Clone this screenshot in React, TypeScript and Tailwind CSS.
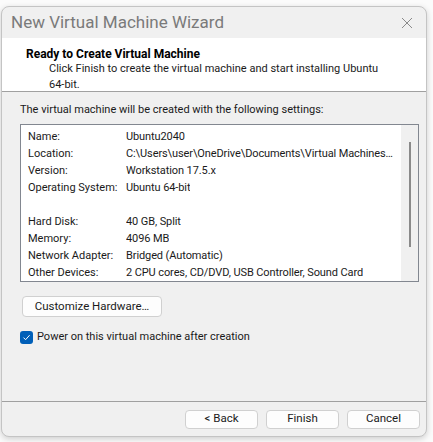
import { useState } from 'react'

const rows = [
  { name: 'Name:', value: 'Ubuntu2040' },
  { name: 'Location:', value: 'C:\\Users\\user\\OneDrive\\Documents\\Virtual Machines…' },
  { name: 'Version:', value: 'Workstation 17.5.x' },
  { name: 'Operating System:', value: 'Ubuntu 64-bit' },
  { name: '', value: '' },
  { name: 'Hard Disk:', value: '40 GB, Split' },
  { name: 'Memory:', value: '4096 MB' },
  { name: 'Network Adapter:', value: 'Bridged (Automatic)' },
  { name: 'Other Devices:', value: '2 CPU cores, CD/DVD, USB Controller, Sound Card' },
]

function WinButton({ label, className }: { label: string; className?: string }) {
  return (
    <button
      className={
        'flex items-center justify-center whitespace-nowrap rounded-[4px] border border-[#d0d0d0] bg-[#fdfdfd] text-[11.5px] text-[#1a1a1a] ' +
        (className || '')
      }
    >
      {label}
    </button>
  )
}

export default function App() {
  const [powerOn, setPowerOn] = useState(true)

  return (
    <div
      className="h-[442px] w-[433px] bg-[#fbfbfb] pt-[6px] pl-[1px]"
      style={{ fontFamily: 'Roboto, "Noto Sans", sans-serif' }}
    >
      <div className="flex h-[431px] w-[426px] flex-col overflow-hidden rounded-[8px] border border-[#c4c4c4] bg-[#f0f0f0] shadow-[0_2px_6px_rgba(0,0,0,0.18)]">
        {/* title bar */}
        <div className="flex h-[31px] shrink-0 items-center justify-between pl-[9px] pr-[13px]">
          <span className="whitespace-nowrap text-[17px] text-[#7a7a7a]">New Virtual Machine Wizard</span>
          <svg width="12" height="12" viewBox="0 0 12 12" className="mt-[1px]">
            <path d="M1 1 L11 11 M11 1 L1 11" stroke="#8a8a8a" strokeWidth="1" />
          </svg>
        </div>

        {/* header */}
        <div className="h-[54px] shrink-0 whitespace-nowrap border-b border-[#a0a0a0] bg-white pl-[24px] pt-[8px] text-[11px] leading-[16px] text-black">
          <div className="text-[12px] font-bold">Ready to Create Virtual Machine</div>
          <div className="mt-[-1px] pl-[23px] text-[#1a1a1a]">
            Click Finish to create the virtual machine and start installing Ubuntu
            <br />
            64-bit.
          </div>
        </div>

        {/* body */}
        <div className="flex flex-1 flex-col px-[18px] text-[11px] text-[#1a1a1a]">
          <div className="mt-[10px] whitespace-nowrap leading-[16px]">
            The virtual machine will be created with the following settings:
          </div>

          <div className="mt-[6px] flex h-[158px] w-[399px] border border-[#828790] bg-white">
            <div className="min-w-0 flex-1 pl-[7px] pt-[4px]">
              {rows.map((r, i) => (
                <div key={i} className="flex h-[17px] items-center whitespace-nowrap">
                  <span className="w-[98px] shrink-0">{r.name}</span>
                  <span className="min-w-0 truncate tracking-[-0.1px]">{r.value}</span>
                </div>
              ))}
            </div>
            <div className="flex w-[17px] shrink-0 justify-center bg-[#f0f0f0] pt-[17px]">
              <div className="h-[105px] w-[2px] bg-[#8a8a8a]" />
            </div>
          </div>

          <WinButton label="Customize Hardware…" className="mt-[14px] ml-[2px] h-[21px] w-[140px]" />

          <label className="mt-[12px] flex items-center gap-[4px] whitespace-nowrap">
            <span
              onClick={() => setPowerOn(!powerOn)}
              className="flex h-[13px] w-[13px] items-center justify-center rounded-[3px] bg-[#005fb8]"
            >
              {powerOn && (
                <svg width="9" height="9" viewBox="0 0 9 9">
                  <path d="M1.5 4.6 L3.6 6.7 L7.6 2.2" stroke="white" strokeWidth="1" fill="none" />
                </svg>
              )}
            </span>
            <span>Power on this virtual machine after creation</span>
          </label>
        </div>

        {/* footer */}
        <div className="flex h-[35px] shrink-0 items-center justify-end gap-[8px] border-t border-[#a0a0a0] pr-[6px]">
          <WinButton label="< Back" className="h-[19px] w-[73px]" />
          <WinButton label="Finish" className="h-[19px] w-[73px]" />
          <WinButton label="Cancel" className="h-[19px] w-[73px]" />
        </div>
      </div>
    </div>
  )
}
